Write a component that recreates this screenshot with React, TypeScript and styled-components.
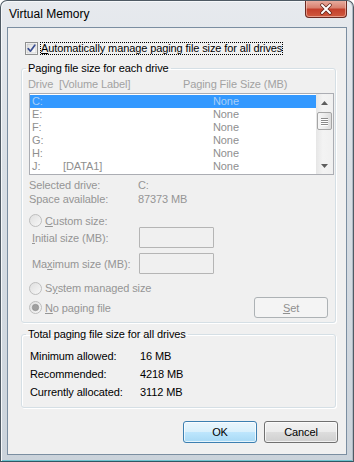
import React from 'react';
import styled, { createGlobalStyle } from 'styled-components';

const Global = createGlobalStyle`
  html, body { margin: 0; padding: 0; background: #ffffff; }
  body { font-family: "Liberation Sans", Arial, sans-serif; }
`;

const Window = styled.div`
  width: 354px;
  height: 462px;
  box-sizing: border-box;
  border: 1px solid #4f5a64;
  border-bottom-color: #2f5863;
  border-radius: 7px 7px 0 0;
  background: linear-gradient(180deg, #e7eaee 0%, #d9dfe5 35%, #cbd3db 100%);
  box-shadow: inset 1px 1px 0 #f6f8fa, inset -1px 0 0 #aeb9c4, inset 0 -1px 0 #6fc3cf;
  display: flex;
  flex-direction: column;
  overflow: hidden;
`;

const TitleBar = styled.div`
  height: 26px;
  flex: none;
  display: flex;
  justify-content: space-between;
  align-items: flex-start;
  padding: 0 6px 0 8px;
`;

const Title = styled.div`
  font-size: 12px;
  line-height: 14px;
  margin-top: 6px;
  color: #000;
`;

const CloseButton = styled.div`
  width: 42px;
  height: 18px;
  margin-top: -1px;
  box-sizing: border-box;
  border: 1px solid #6b2a22;
  border-top: none;
  border-radius: 0 0 4px 4px;
  background: linear-gradient(180deg, #e9b1a4 0%, #d98270 45%, #c4402c 55%, #cf5a3f 100%);
  box-shadow: inset 0 0 0 1px rgba(255, 220, 210, 0.5);
  display: flex;
  align-items: center;
  justify-content: center;
`;

const Client = styled.div`
  flex: 1;
  margin: 0 6px 6px 6px;
  border: 1px solid #7b8ea1;
  background: #f0f0f0;
  display: flex;
  flex-direction: column;
  font-size: 11px;
  letter-spacing: -0.1px;
  color: #000;
`;

const CheckRow = styled.div`
  display: flex;
  align-items: center;
  height: 13px;
  margin: 14px 0 0 17px;
  gap: 2px;
`;

const FocusLabel = styled.span`
  line-height: 13px;
  padding: 0 1px;
  outline: 1px dotted #000;
  outline-offset: -1px;
`;

const Group = styled.fieldset<{ $mt: number; $pb: number }>`
  margin: ${(p) => p.$mt}px 0 0 13px;
  width: 315px;
  min-width: 0;
  box-sizing: border-box;
  padding: 0 0 ${(p) => p.$pb}px 0;
  border: 1px solid #d5dfe5;
  border-radius: 3px;
  box-shadow: inset 1px 1px 0 #fff, 1px 1px 0 #fff;
`;

const Legend = styled.legend`
  padding: 0 2px;
  margin-left: 4px;
  line-height: 14px;
  font-size: 11px;
  color: #000;
`;

const HeaderRow = styled.div`
  display: grid;
  grid-template-columns: 31px 124px auto;
  height: 14px;
  line-height: 14px;
  margin-top: 2px;
  padding-left: 6px;
  color: #a2a2a2;
`;

const ListBox = styled.div`
  margin: 2px 0 0 7px;
  width: 305px;
  height: 82px;
  box-sizing: border-box;
  border: 1px solid #abadb3;
  background: #fff;
  display: flex;
`;

const Rows = styled.div`
  flex: 1;
  padding-top: 1px;
  display: flex;
  flex-direction: column;
`;

const DriveRow = styled.div<{ $selected?: boolean }>`
  display: grid;
  grid-template-columns: 31px 150px auto;
  height: 13px;
  line-height: 13px;
  padding-left: 2px;
  background: ${(p) => (p.$selected ? '#3399ff' : 'transparent')};
  color: ${(p) => (p.$selected ? '#a9cff7' : '#8f8f8f')};
`;

const ScrollBar = styled.div`
  width: 17px;
  display: flex;
  flex-direction: column;
  align-items: center;
  background: linear-gradient(90deg, #e6e6e6 0%, #f3f3f3 40%, #f0f0f0 100%);
`;

const ScrollArrow = styled.div`
  height: 17px;
  width: 17px;
  display: flex;
  align-items: center;
  justify-content: center;
`;

const ScrollThumb = styled.div`
  width: 15px;
  height: 18px;
  margin-top: 1px;
  box-sizing: border-box;
  border: 1px solid #a5a5a5;
  border-radius: 2px;
  background: linear-gradient(90deg, #f7f7f7 0%, #ececec 50%, #dcdcdc 100%);
  display: flex;
  flex-direction: column;
  align-items: center;
  justify-content: center;
  gap: 1px;
`;

const Grip = styled.div`
  width: 7px;
  height: 1px;
  background: #8a8a8a;
  box-shadow: 0 1px 0 #ffffff;
`;

const ScrollSpacer = styled.div`
  flex: 1;
`;

const InfoRow = styled.div<{ $mt: number }>`
  display: grid;
  grid-template-columns: 109px auto;
  height: 14px;
  line-height: 14px;
  margin-top: ${(p) => p.$mt}px;
  padding-left: 7px;
  color: #959595;
`;

const RadioRow = styled.div<{ $mt: number; $h: number }>`
  display: flex;
  align-items: center;
  gap: 3px;
  height: ${(p) => p.$h}px;
  margin-top: ${(p) => p.$mt}px;
  padding-left: 7px;
  color: #959595;
`;

const InputRow = styled.div<{ $mt: number }>`
  display: grid;
  grid-template-columns: 107px 75px;
  align-items: center;
  height: 21px;
  margin-top: ${(p) => p.$mt}px;
  padding-left: 10px;
  color: #959595;
`;

const TextBox = styled.div`
  width: 75px;
  height: 21px;
  box-sizing: border-box;
  border: 1px solid #b5b5b5;
  border-radius: 1px;
  background: #f0f0f0;
`;

const NoPagingRow = styled.div`
  display: flex;
  align-items: center;
  justify-content: space-between;
  height: 21px;
  margin-top: 2px;
  padding: 0 7px;
  color: #959595;
`;

const RadioInline = styled.span`
  display: flex;
  align-items: center;
  gap: 3px;
`;

const Button = styled.div<{ $variant: 'default' | 'normal' | 'disabled' }>`
  width: 74px;
  height: ${(p) => (p.$variant === 'disabled' ? 21 : 22)}px;
  box-sizing: border-box;
  border-radius: 3px;
  display: flex;
  align-items: center;
  justify-content: center;
  font-size: 11px;
  border: 1px solid
    ${(p) => (p.$variant === 'default' ? '#3c7fb1' : p.$variant === 'normal' ? '#707070' : '#adb2b5')};
  color: ${(p) => (p.$variant === 'disabled' ? '#8f8f8f' : '#000')};
  background: ${(p) =>
    p.$variant === 'default'
      ? 'linear-gradient(180deg, #eaf6fd 0%, #d9f0fc 50%, #bee6fd 51%, #a7d9f5 100%)'
      : p.$variant === 'normal'
      ? 'linear-gradient(180deg, #f2f2f2 0%, #ebebeb 50%, #dddddd 51%, #cfcfcf 100%)'
      : '#f4f4f4'};
  box-shadow: ${(p) =>
    p.$variant === 'disabled' ? 'none' : 'inset 0 0 0 1px rgba(255,255,255,0.7)'};
`;

const TotalRow = styled.div<{ $mt?: number }>`
  display: grid;
  grid-template-columns: 110px auto;
  height: 18px;
  line-height: 18px;
  margin-top: ${(p) => p.$mt ?? 0}px;
  padding-left: 8px;
`;

const ButtonBar = styled.div`
  display: flex;
  justify-content: flex-end;
  gap: 7px;
  margin-top: 13px;
  padding-right: 8px;
`;

const U = styled.span`
  text-decoration: underline;
`;

const CheckBoxIcon = () => (
  <svg width="13" height="13" viewBox="0 0 13 13">
    <defs>
      <linearGradient id="cbg" x1="0" y1="0" x2="1" y2="1">
        <stop offset="0" stopColor="#dcdcdc" />
        <stop offset="1" stopColor="#ffffff" />
      </linearGradient>
    </defs>
    <rect x="0.5" y="0.5" width="12" height="12" fill="#fff" stroke="#8e8f8f" />
    <rect x="2" y="2" width="9" height="9" fill="url(#cbg)" stroke="#b9b9b9" strokeWidth="0.6" />
    <path d="M3.2 6.6 L5.4 9.2 L9.8 3.2" fill="none" stroke="#3b4f92" strokeWidth="1.7" strokeLinecap="round" strokeLinejoin="round" />
  </svg>
);

const RadioIcon = ({ checked }: { checked?: boolean }) => (
  <svg width="13" height="13" viewBox="0 0 13 13">
    <defs>
      <linearGradient id={checked ? 'rg1' : 'rg0'} x1="0" y1="0" x2="1" y2="1">
        <stop offset="0" stopColor="#dedede" />
        <stop offset="1" stopColor="#f8f8f8" />
      </linearGradient>
    </defs>
    <circle cx="6.5" cy="6.5" r="6" fill={`url(#${checked ? 'rg1' : 'rg0'})`} stroke="#bdbdbd" />
    {checked && <circle cx="6.5" cy="6.5" r="3.2" fill="#a0a0a0" stroke="#8a8a8a" strokeWidth="0.6" />}
  </svg>
);

const ArrowIcon = ({ down }: { down?: boolean }) => (
  <svg width="7" height="4" viewBox="0 0 7 4">
    <path d={down ? 'M0 0 L7 0 L3.5 4 Z' : 'M0 4 L7 4 L3.5 0 Z'} fill="#5e5e5e" />
  </svg>
);

const CloseGlyph = () => (
  <svg width="14" height="12" viewBox="0 0 14 12">
    <path d="M3 2 L11 10 M11 2 L3 10" stroke="#5a2017" strokeWidth="3.4" strokeLinecap="round" />
    <path d="M3 2 L11 10 M11 2 L3 10" stroke="#ffffff" strokeWidth="2" strokeLinecap="round" />
  </svg>
);

const drives = [
  { d: 'C:', label: '', size: 'None', selected: true },
  { d: 'E:', label: '', size: 'None' },
  { d: 'F:', label: '', size: 'None' },
  { d: 'G:', label: '', size: 'None' },
  { d: 'H:', label: '', size: 'None' },
  { d: 'J:', label: '[DATA1]', size: 'None' },
];

export default function App() {
  return (
    <>
      <Global />
      <Window>
        <TitleBar>
          <Title>Virtual Memory</Title>
          <CloseButton>
            <CloseGlyph />
          </CloseButton>
        </TitleBar>
        <Client>
          <CheckRow>
            <CheckBoxIcon />
            <FocusLabel>
              <U>A</U>utomatically manage paging file size for all drives
            </FocusLabel>
          </CheckRow>

          <Group $mt={6} $pb={4}>
            <Legend>Paging file size for each drive</Legend>
            <HeaderRow>
              <span>Drive</span>
              <span>[Volume Label]</span>
              <span>Paging File Size (MB)</span>
            </HeaderRow>
            <ListBox>
              <Rows>
                {drives.map((r) => (
                  <DriveRow key={r.d} $selected={r.selected}>
                    <span>{r.d}</span>
                    <span>{r.label}</span>
                    <span>{r.size}</span>
                  </DriveRow>
                ))}
              </Rows>
              <ScrollBar>
                <ScrollArrow>
                  <ArrowIcon />
                </ScrollArrow>
                <ScrollThumb>
                  <Grip />
                  <Grip />
                  <Grip />
                  <Grip />
                </ScrollThumb>
                <ScrollSpacer />
                <ScrollArrow>
                  <ArrowIcon down />
                </ScrollArrow>
              </ScrollBar>
            </ListBox>
            <InfoRow $mt={3}>
              <span>Selected drive:</span>
              <span>C:</span>
            </InfoRow>
            <InfoRow $mt={0}>
              <span>Space available:</span>
              <span>87373 MB</span>
            </InfoRow>
            <RadioRow $mt={8} $h={13}>
              <RadioIcon />
              <span>
                <U>C</U>ustom size:
              </span>
            </RadioRow>
            <InputRow $mt={0}>
              <span>
                <U>I</U>nitial size (MB):
              </span>
              <TextBox />
            </InputRow>
            <InputRow $mt={5}>
              <span>
                Ma<U>x</U>imum size (MB):
              </span>
              <TextBox />
            </InputRow>
            <RadioRow $mt={7} $h={14}>
              <RadioIcon />
              <span>
                S<U>y</U>stem managed size
              </span>
            </RadioRow>
            <NoPagingRow>
              <RadioInline>
                <RadioIcon checked />
                <span>
                  <U>N</U>o paging file
                </span>
              </RadioInline>
              <Button $variant="disabled">
                <span>
                  <U>S</U>et
                </span>
              </Button>
            </NoPagingRow>
          </Group>

          <Group $mt={4} $pb={6}>
            <Legend>Total paging file size for all drives</Legend>
            <TotalRow $mt={6}>
              <span>Minimum allowed:</span>
              <span>16 MB</span>
            </TotalRow>
            <TotalRow>
              <span>Recommended:</span>
              <span>4218 MB</span>
            </TotalRow>
            <TotalRow>
              <span>Currently allocated:</span>
              <span>3112 MB</span>
            </TotalRow>
          </Group>

          <ButtonBar>
            <Button $variant="default">OK</Button>
            <Button $variant="normal">Cancel</Button>
          </ButtonBar>
        </Client>
      </Window>
    </>
  );
}
